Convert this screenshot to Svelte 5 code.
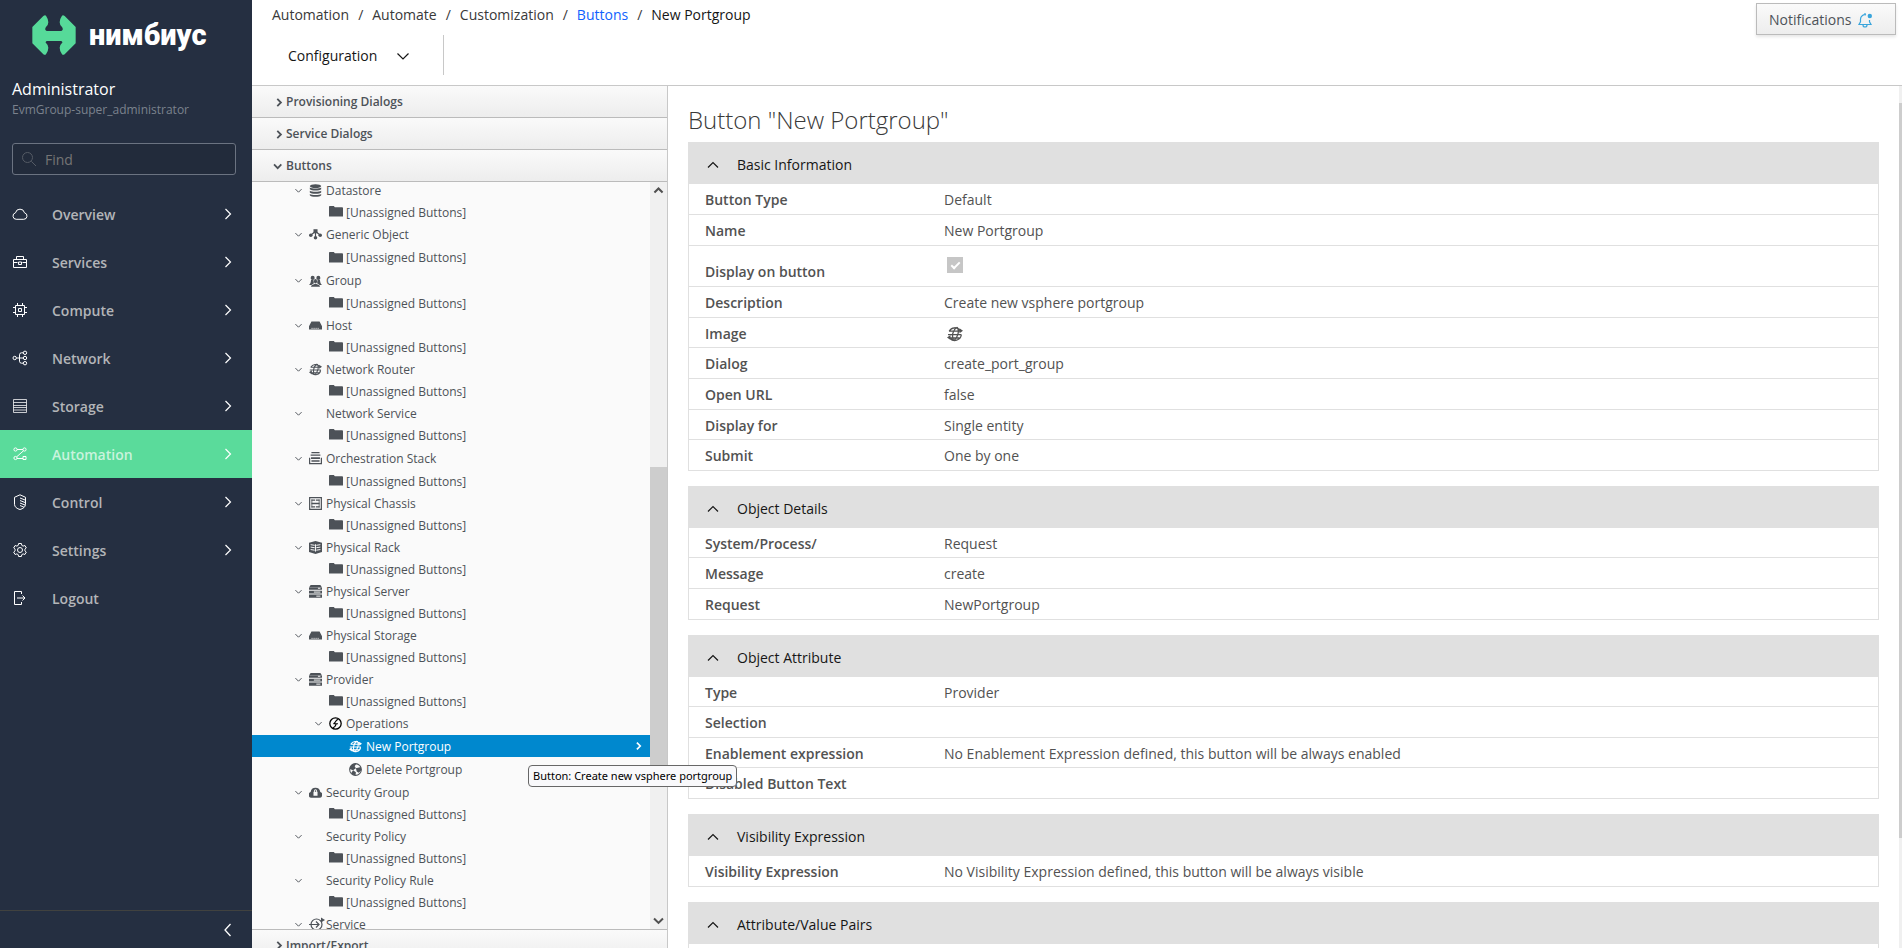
<script>
	const navItems = [
		{ label: 'Overview', icon: 'cloud' },
		{ label: 'Services', icon: 'toolbox' },
		{ label: 'Compute', icon: 'chip' },
		{ label: 'Network', icon: 'network' },
		{ label: 'Storage', icon: 'storage' },
		{ label: 'Automation', icon: 'flow' },
		{ label: 'Control', icon: 'shield' },
		{ label: 'Settings', icon: 'gear' },
		{ label: 'Logout', icon: 'logout', leaf: true }
	];

	const crumbs = ['Automation', 'Automate', 'Customization'];

	const tree = [
		{ label: 'Datastore', icon: 'database' },
		{ label: 'Generic Object', icon: 'object', size: 'tall', childSize: 'tall' },
		{ label: 'Group', icon: 'group', size: 'tall' },
		{ label: 'Host', icon: 'host' },
		{ label: 'Network Router', icon: 'globe' },
		{ label: 'Network Service' },
		{ label: 'Orchestration Stack', icon: 'stack', size: 'taller' },
		{ label: 'Physical Chassis', icon: 'chassis' },
		{ label: 'Physical Rack', icon: 'rack' },
		{ label: 'Physical Server', icon: 'server' },
		{ label: 'Physical Storage', icon: 'host' },
		{ label: 'Provider', icon: 'server', operations: true },
		{ label: 'Security Group', icon: 'cloudlock' },
		{ label: 'Security Policy' },
		{ label: 'Security Policy Rule' },
		{ label: 'Service', icon: 'service', leaf: true }
	];

	const rows = tree.flatMap((node) => {
		const list = [{ ...node, depth: 0, caret: true }];
		if (!node.leaf) {
			list.push({ label: '[Unassigned Buttons]', icon: 'folder', depth: 1, size: node.childSize });
		}
		if (node.operations) {
			list.push(
				{ label: 'Operations', icon: 'bolt', depth: 1, caret: true, size: 'tall' },
				{ label: 'New Portgroup', icon: 'globe', depth: 2 },
				{ label: 'Delete Portgroup', icon: 'ball', depth: 2, size: 'taller' }
			);
		}
		return list;
	});

	let sections = $state([
		{
			title: 'Basic Information',
			open: true,
			rows: [
				{ label: 'Button Type', value: 'Default' },
				{ label: 'Name', value: 'New Portgroup' },
				{ label: 'Display on button', type: 'check' },
				{ label: 'Description', value: 'Create new vsphere portgroup' },
				{ label: 'Image', type: 'icon', short: true },
				{ label: 'Dialog', value: 'create_port_group' },
				{ label: 'Open URL', value: 'false' },
				{ label: 'Display for', value: 'Single entity', short: true },
				{ label: 'Submit', value: 'One by one' }
			]
		},
		{
			title: 'Object Details',
			open: true,
			rows: [
				{ label: 'System/Process/', value: 'Request', short: true },
				{ label: 'Message', value: 'create' },
				{ label: 'Request', value: 'NewPortgroup' }
			]
		},
		{
			title: 'Object Attribute',
			open: true,
			rows: [
				{ label: 'Type', value: 'Provider', short: true },
				{ label: 'Selection', value: '' },
				{
					label: 'Enablement expression',
					value: 'No Enablement Expression defined, this button will be always enabled',
					short: true
				},
				{ label: 'Disabled Button Text', value: '' }
			]
		},
		{
			title: 'Visibility Expression',
			open: true,
			rows: [
				{
					label: 'Visibility Expression',
					value: 'No Visibility Expression defined, this button will be always visible'
				}
			]
		},
		{ title: 'Attribute/Value Pairs', open: true, rows: [{ label: '', value: '' }] }
	]);

	let current = $state('Automation');
	let selected = $state('New Portgroup');

	// inner markup of the 16x16 icons
	const line = 'fill="none" stroke="currentColor"';
	const icons = {
		cloud: `<path ${line} d="M4.2 13.3h7.6a3.3 3.3 0 0 0 .7-6.5 4.6 4.6 0 0 0-9 0 3.3 3.3 0 0 0 .7 6.5z"/>`,
		toolbox: `<path ${line} d="M1.5 5.5h13v8h-13zM4.5 5.5v-3h7v3M1.5 8.5h4m5 0h4M6.5 8v2.500h3V8z"/>`,
		chip: `<path ${line} d="M3.500 3.500h9v9h-9zM6.500 6.500h3v3h-3zM5.500 1v2.500M10.500 1v2.500M5.500 12.500V15M10.500 12.500V15M1 5.500h2.500M1 10.500h2.500M12.500 5.500H15M12.500 10.500H15"/>`,
		network: `<g ${line}><circle cx="2.700" cy="8" r="1.700"/><circle cx="13" cy="2.800" r="1.700"/><circle cx="13" cy="8" r="1.700"/><circle cx="13" cy="13.200" r="1.700"/><path d="M4.500 8h6.800M11.300 2.800H9.500a2 2 0 0 0-2 2v6.400a2 2 0 0 0 2 2h1.800"/></g>`,
		storage: `<path ${line} stroke-opacity=".75" d="M1.500 1.500h13v13h-13zM1.500 4.500h13M1.500 7.500h13M1.500 9.500h13M1.500 12h13"/>`,
		flow: `<g ${line}><circle cx="3.500" cy="3.500" r="1.600"/><circle cx="12.500" cy="3.500" r="1.600"/><circle cx="3.500" cy="12" r="1.600"/><path d="M5 3.500h6M11.500 4.800L4.700 10.800M5 12.500h6M11 10.500h3v3h-3z"/></g>`,
		shield: `<path ${line} d="M8 .8L2.500 3.300v7c0 2.600 2.500 4.500 5.500 5.200 3-.7 5.500-2.600 5.500-5.200v-7zM8 4l5 2M8 6.500l5 2M8 9l5 2M8 11.500l4 1.700"/>`,
		gear: `<path ${line} d="M6.600 1.500h2.800l.4 1.900 1.300.7 1.800-.6 1.400 2.400-1.400 1.300v1.600l1.400 1.300-1.400 2.400-1.800-.6-1.300.7-.4 1.900H6.600l-.4-1.900-1.300-.7-1.800.6-1.400-2.400 1.400-1.300V7.200L1.700 5.900l1.400-2.400 1.800.6 1.300-.7z"/><circle cx="8" cy="8" r="2.500" ${line}/>`,
		logout: `<path ${line} d="M9.500 4V1.500h-7v13h7V12M5 8h8M10.500 5.500L13 8l-2.500 2.500"/>`,
		find: `<g ${line}><circle cx="6.500" cy="6.500" r="5"/><path d="M10.300 10.300L15 15"/></g>`,
		right: `<path ${line} stroke-width="1.200" d="M5.500 3l5 5-5 5"/>`,
		left: `<path ${line} stroke-width="1.300" d="M10.500 2l-5.500 6 5.500 6"/>`,
		down: `<path ${line} stroke-width="1.200" d="M2.500 5.500L8 11l5.500-5.500"/>`,
		up: `<path ${line} stroke-width="1.200" d="M3 10.500l5-5 5 5"/>`,
		angleright: `<path ${line} stroke-width="2.200" d="M6.500 3.500L11 8l-4.500 4.500"/>`,
		angledown: `<path ${line} stroke-width="2.200" d="M2.500 5.500L7 10l4.500-4.500"/>`,
		caret: `<path ${line} stroke-width="1.700" d="M2.500 5.500L8 11l5.500-5.500"/>`,
		bell: `<path ${line} stroke-width="1.200" d="M9 2.800a4.500 4.500 0 0 0-5.500 4.400v2.600L2 12.500h12l-1.500-2.700V8M6 13a2 2 0 0 0 4 0M8 1v1.500"/><circle cx="12.800" cy="4" r="2.200" fill="currentColor"/>`,
		folder: `<path fill="currentColor" d="M0 2.200C0 1.500.4 1 1 1h4.500l1.200 1.500H15c.6 0 1 .4 1 1V13H0z"/>`,
		database: `<g fill="currentColor"><ellipse cx="8" cy="2.600" rx="7" ry="2.400"/><path d="M1 4.300c2 1.800 12 1.800 14 0v2.200c-1.500 2.200-12.500 2.200-14 0zM1 8.300c2 1.800 12 1.800 14 0v2.200c-1.500 2.200-12.500 2.200-14 0zM1 12.200c2 1.800 12 1.800 14 0v1.600c-1.500 2.600-12.500 2.600-14 0z"/></g>`,
		object: `<g fill="currentColor"><path d="M5.500 1.500h5v5h-5z"/><circle cx="2.200" cy="9" r="2.200"/><circle cx="13.800" cy="9" r="2.200"/><circle cx="8" cy="12" r="2.200"/></g><path ${line} stroke-width="1.400" d="M8 4v8M7 5L2 9M9 5l5 4"/>`,
		group: `<g fill="currentColor"><circle cx="4.500" cy="4.800" r="2.500"/><circle cx="11.500" cy="4.800" r="2.500"/><path d="M0 13.500c2-1 2-3 2.500-6h3l.5 4-3 2zM16 13.500c-2-1-2-3-2.500-6h-3l-.5 4 3 2z"/><ellipse cx="8" cy="9" rx="1.900" ry="2.800"/><path d="M2.500 15.700c0-2 2-3 4.500-3.500h2c2.500.5 4.500 1.500 4.500 3.500z"/></g>`,
		host: `<path fill="currentColor" d="M3 3h10l3 6H0zM0 9h16v4H0z"/><path stroke="#fafafa" stroke-dasharray="1.500 1" d="M3 11.500h10"/>`,
		globe: `<g ${line} stroke-width="1.300"><path d="M13 4.200A6.500 6.500 0 0 0 2.200 5.200M3 12.200a6.500 6.500 0 0 0 11.300-3.200M9.800 1.200C5.700 4 4.500 10 6.500 14.500M10.200 1.200c2.500 4 .5 10.500-3.500 13.600M2 5.200h11M1 8.700h13.500M2.500 12h10"/></g><path fill="currentColor" d="M12.500 2.200L16 4.700l-3.500 2.500zM3.500 9L0 11.500 3.500 14z"/>`,
		stack: `<path fill="currentColor" d="M3 0h10v1.400H3zM2 3.200h12v1.500H2zM2.500 6.500h11v2h-11zM3 10h10v2H3zM0 7h1.500v6.500h13V7H16v8H0z"/>`,
		chassis: `<path ${line} stroke-width="1.500" d="M.8.800h14.400v14.400H.8z"/><path fill="currentColor" d="M3 3h4.500v1.500H3zM8.500 3H13v1.500H8.500zM3 7.200h10v1.600H3zM3 11.500h4.500V13H3zM8.500 11.500H13V13H8.500z"/><path ${line} d="M3.500 3v10M12.500 3v10"/>`,
		rack: `<path fill="currentColor" d="M0 2l8-2 8 2v11.500L8 16l-8-2.500z"/><path stroke="#fafafa" stroke-width="1.200" fill="none" d="M2 4.500l5 .8M2 7.500l5 .8M2 10.500l5 .8M9 5.300l5-.8M9 8.300l5-.8M9 11.300l5-.8M8 4v9"/>`,
		server: `<path fill="currentColor" d="M2 0h12l2 3H0zM0 3.500h16v2.300H0zM0 7h16v3.500H0zM0 11.700h16v4H0z"/><path stroke="#fafafa" stroke-width="1.200" d="M6 8.700h8M9 13.700h5M11 4h3"/>`,
		bolt: `<g fill="none" stroke="#000"><circle cx="8" cy="8" r="7" stroke-width="1.600"/><path stroke-width="1.400" d="M11.500 3C7.500 3.500 9 6.500 5.500 8.300h5.500M9 8c-1 2-.5 4-4 5.200"/></g>`,
		ball: `<circle cx="8" cy="8" r="7.200" fill="#fafafa" stroke="currentColor" stroke-width="1.300"/><path fill="currentColor" d="M9 .8C4 .3 1 4 .9 7.500L5 9l3.500-2.500L7 4zM8.500 6.500L14.500 5l.8 4L12 12l-2.500-1.500zM5 9l3.500 2.500L8 15.200c-2 0-4-1-5.200-3z"/>`,
		cloudlock: `<path fill="currentColor" fill-rule="evenodd" d="M3.500 14.500A3.600 3.600 0 0 1 2 7.500 6 6 0 0 1 13.900 7.500a3.600 3.600 0 0 1-1.400 7zM5.500 7v5h5V7h-.6V6a1.900 1.900 0 0 0-3.800 0v1zm1.700 0V6a.8.800 0 0 1 1.600 0v1z"/>`,
		service: `<g ${line} stroke-width="1.200"><circle cx="7.500" cy="8.500" r="5.500"/><path d="M0 8.500h9.500M7 5.500l3 3-3 3"/></g><path fill="currentColor" d="M12 1.500l4 2.500-4 2.500z"/>`
	};
</script>

{#snippet icon(name)}
	<svg class="icon {name}" viewBox="0 0 16 16" aria-hidden="true">{@html icons[name]}</svg>
{/snippet}

{#snippet fold(title, open)}
	<button class="fold">
		{@render icon(open ? 'angledown' : 'angleright')}
		<span>{title}</span>
	</button>
{/snippet}

<div class="page">
	<aside class="sidebar">
		<a class="brand" href="#home">
			<svg viewBox="0 0 130 120" aria-hidden="true">
				<path
					fill="#56da99"
					d="M33 3Q38-1 41 2Q48 12 48 22Q48 30 41 36Q37 41 40 46L43 48H87L90 46Q93 41 89 36Q82 30 82 22Q82 12 89 2Q92-1 97 3L130 36V85L97 118Q92 121 89 118Q82 108 82 98Q82 90 89 84Q92 81 87 78H43Q38 81 41 84Q48 90 48 98Q48 108 41 118Q38 121 33 118L0 85V36Z"
				/>
			</svg>
			<span>нимбиус</span>
		</a>
		<div class="user">
			<div class="user-name">Administrator</div>
			<div class="user-group">EvmGroup-super_administrator</div>
		</div>
		<label class="search">
			{@render icon('find')}
			<input type="text" placeholder="Find" aria-label="Find" />
		</label>
		<nav class="menu" aria-label="Main">
			{#each navItems as item}
				<a
					href="#{item.label.toLowerCase()}"
					class:active={item.label === current}
					onclick={() => (current = item.label)}
				>
					{@render icon(item.icon)}
					<span>{item.label}</span>
					{#if !item.leaf}{@render icon('right')}{/if}
				</a>
			{/each}
		</nav>
		<button class="collapse" aria-label="Collapse menu">{@render icon('left')}</button>
	</aside>

	<div class="main">
		<header>
			<nav class="crumbs" aria-label="Breadcrumb">
				{#each crumbs as crumb}
					<span>{crumb}</span>
				{/each}
				<a href="#buttons">Buttons</a>
				<strong>New Portgroup</strong>
			</nav>
			<div class="toolbar">
				<button>Configuration {@render icon('down')}</button>
			</div>
		</header>

		<div class="columns">
			<section class="explorer">
				{@render fold('Provisioning Dialogs', false)}
				{@render fold('Service Dialogs', false)}
				{@render fold('Buttons', true)}
				<div class="tree-wrap">
					<div class="tree">
						{#each rows as row}
							<button
								class="row {row.size ?? ''}"
								class:selected={row.label === selected}
								style="padding-left: {42 + row.depth * 20}px"
								onclick={() => (selected = row.label)}
							>
								<span class="slot caret-slot">{#if row.caret}{@render icon('caret')}{/if}</span>
								<span class="slot">{#if row.icon}{@render icon(row.icon)}{/if}</span>
								<span class="row-label">{row.label}</span>
								{#if row.label === selected}{@render icon('angleright')}{/if}
							</button>
						{/each}
					</div>
					<div class="scrollbar" aria-hidden="true">
						{@render icon('up')}
						<div class="track"><div class="thumb"></div></div>
						{@render icon('down')}
					</div>
				</div>
				{@render fold('Import/Export', false)}
			</section>

			<main class="details">
				<h1>Button "New Portgroup"</h1>
				{#each sections as section}
					<section class="panel">
						<button class="panel-head" aria-expanded={section.open} onclick={() => (section.open = !section.open)}>
							{@render icon(section.open ? 'up' : 'down')}
							<span>{section.title}</span>
						</button>
						{#if section.open}
							<table>
								<tbody>
									{#each section.rows as row}
										<tr class:short={row.short} class:check-row={row.type === 'check'}>
											<th scope="row">
												{#if row.type === 'check'}
													<label for="display">{row.label}</label>
												{:else}
													{row.label}
												{/if}
											</th>
											<td>
												{#if row.type === 'check'}
													<input id="display" type="checkbox" checked disabled />
												{:else if row.type === 'icon'}
													{@render icon('globe')}
												{:else}
													{row.value}
												{/if}
											</td>
										</tr>
									{/each}
								</tbody>
							</table>
						{/if}
					</section>
				{/each}
			</main>
			<div class="page-scroll" aria-hidden="true"><div></div></div>
		</div>
	</div>
	<button class="notifications">Notifications {@render icon('bell')}</button>
	<div class="tooltip" role="tooltip">Button: Create new vsphere portgroup</div>
</div>

<style>
	:global(body) {
		margin: 0;
		overflow: hidden;
	}

	.page {
		position: relative;
		display: flex;
		height: 100vh;
		overflow: hidden;
		background: #fff;
		color: #525252;
		font-family: 'Open Sans', 'Noto Sans', sans-serif;
		font-size: 14px;
		line-height: 20px;
	}

	button,
	input {
		margin: 0;
		border: 0;
		padding: 0;
		background: none;
		color: inherit;
		font: inherit;
		text-align: left;
	}

	button {
		cursor: pointer;
	}

	a {
		color: inherit;
		text-decoration: none;
	}

	.icon {
		flex: none;
		width: 16px;
		height: 16px;
	}

	.sidebar {
		display: flex;
		flex: none;
		flex-direction: column;
		width: 252px;
		background: #252f41;
		color: #fff;
	}

	.brand {
		display: flex;
		align-items: center;
		gap: 13px;
		padding: 15px 0 0 32px;
		font-family: Roboto, 'Open Sans', sans-serif;
		font-size: 29px;
		font-weight: 900;
		line-height: 40px;
	}

	.brand svg {
		width: 44px;
		height: 40px;
	}

	.user {
		padding: 23px 12px 0;
	}

	.user-name {
		font-size: 16px;
		line-height: 22px;
	}

	.user-group {
		color: #7b828d;
		font-size: 12px;
	}

	.search {
		display: flex;
		align-items: center;
		gap: 8px;
		box-sizing: border-box;
		height: 32px;
		margin: 23px 16px 15px 12px;
		border: 1px solid #6b7381;
		border-radius: 3px;
		padding: 0 8px;
		background: #222b3b;
		color: #555b65;
	}

	.search input {
		flex: 1;
		min-width: 0;
		outline: 0;
		padding-top: 2px;
	}

	.search input::placeholder {
		color: #757575;
	}

	.menu {
		flex: 1;
	}

	.menu a {
		display: flex;
		align-items: center;
		height: 48px;
		padding: 0 16px 0 12px;
		font-weight: 600;
	}

	.menu span {
		flex: 1;
		padding: 2px 0 0 24px;
		color: #b3b5b8;
	}

	.menu .active {
		background: #5adb9b;
	}

	.menu .active span {
		color: #c9f3dd;
	}

	.collapse {
		display: flex;
		align-items: center;
		justify-content: flex-end;
		height: 38px;
		border-top: 1px solid #41423f;
		padding-right: 16px;
	}

	.main {
		display: flex;
		flex: 1;
		flex-direction: column;
		min-width: 0;
	}

	header {
		border-bottom: 1px solid #c8c8c8;
		color: #161616;
	}

	.crumbs {
		display: flex;
		padding: 5px 20px;
		color: #393939;
	}

	.crumbs > :not(:last-child)::after {
		padding: 0 9px;
		color: #393939;
		content: '/';
	}

	.crumbs a {
		color: #0f62fe;
	}

	.crumbs strong {
		color: #161616;
		font-weight: 400;
	}

	.toolbar {
		display: flex;
		padding: 5px 0 10px 36px;
	}

	.toolbar button {
		display: flex;
		align-items: center;
		gap: 18px;
		box-sizing: border-box;
		height: 40px;
		border-right: 1px solid #c8c8c8;
		padding: 2px 32px 0 0;
	}

	.columns {
		display: flex;
		flex: 1;
		min-height: 0;
	}

	.explorer {
		display: flex;
		flex: none;
		flex-direction: column;
		width: 415px;
		margin-bottom: -13px;
		border-right: 1px solid #c8c8c8;
		background: #fafafa;
	}

	.fold {
		display: flex;
		flex: none;
		align-items: center;
		gap: 1px;
		height: 32px;
		border-bottom: 1px solid #bbb;
		padding: 1px 0 0 20px;
		background: linear-gradient(#fafafa, #ededed);
		color: #4d5258;
		font-size: 12px;
		font-weight: 600;
	}

	.fold .icon {
		width: 13px;
		height: 13px;
	}

	.fold:last-child {
		border-top: 1px solid #bbb;
	}

	.tree-wrap {
		display: flex;
		flex: 1;
		min-height: 0;
		overflow: hidden;
	}

	.tree {
		flex: 1;
		margin-top: -3px;
		color: #4d5258;
		font-size: 12px;
	}

	.row {
		display: flex;
		align-items: center;
		box-sizing: border-box;
		width: 100%;
		height: 22px;
		padding-right: 6px;
	}

	.tall {
		height: 23px;
	}

	.taller {
		height: 24px;
	}

	.slot {
		display: flex;
		width: 17px;
	}

	.slot .icon {
		width: 13px;
		height: 13px;
	}

	.caret-slot {
		width: 15px;
	}

	.slot .caret {
		width: 9px;
		height: 9px;
	}

	.slot .folder {
		width: 14px;
		height: 14px;
	}

	.slot .service {
		width: 16px;
		height: 16px;
	}

	.row-label {
		flex: 1;
		padding-top: 1px;
	}

	.row > .icon {
		width: 12px;
		height: 12px;
	}

	.selected {
		background: #0088ce;
		color: #fff;
	}

	.scrollbar {
		display: flex;
		flex-direction: column;
		align-items: center;
		width: 17px;
		background: #f0f0f0;
		color: #505050;
	}

	.scrollbar .icon {
		width: 13px;
		height: 17px;
	}

	.scrollbar .icon :global(path) {
		stroke-width: 2.5;
	}

	.track {
		flex: 1;
		width: 100%;
	}

	.thumb {
		height: 43%;
		margin-top: 268px;
		background: #cdcdcd;
	}

	.details {
		flex: 1;
		min-width: 0;
		overflow: hidden;
		padding: 19px 20px 0;
	}

	h1 {
		margin: 0 0 7px;
		color: #393939;
		font-size: 24px;
		font-weight: 300;
		line-height: 30px;
	}

	.panel {
		margin-bottom: 15px;
	}

	.panel-head {
		display: flex;
		align-items: center;
		gap: 16px;
		box-sizing: border-box;
		width: 100%;
		height: 42px;
		padding: 3px 0 0 17px;
		background: #e0e0e0;
		color: #161616;
	}

	table {
		box-sizing: border-box;
		width: 100%;
		border: 1px solid #e0e0e0;
		border-width: 0 1px;
		border-collapse: separate;
		border-spacing: 0;
		table-layout: fixed;
	}

	tr {
		height: 31px;
	}

	.short {
		height: 30px;
	}

	th,
	td {
		border-bottom: 1px solid #e0e0e0;
		padding: 2px 0 0 16px;
		text-align: left;
		vertical-align: middle;
	}

	th {
		width: 223px;
		font-weight: 600;
	}

	.check-row {
		height: 41px;
	}

	.check-row th {
		padding-top: 12px;
	}

	td .icon {
		display: block;
		margin-left: 3px;
	}

	td input {
		display: grid;
		place-items: center;
		appearance: none;
		width: 16px;
		height: 16px;
		margin: 0 0 4px 3px;
		background: #c6c6c6;
	}

	td input::after {
		width: 3px;
		height: 7px;
		margin-bottom: 2px;
		border: solid #fff;
		border-width: 0 2px 2px 0;
		content: '';
		transform: rotate(45deg);
	}

	.page-scroll {
		width: 3px;
		padding-top: 17px;
		background: #f0f0f0;
	}

	.page-scroll div {
		height: 87%;
		background: #cdcdcd;
	}

	.notifications {
		position: absolute;
		top: 3px;
		right: 6px;
		display: flex;
		align-items: center;
		gap: 6px;
		box-sizing: border-box;
		width: 140px;
		height: 32px;
		border: 1px solid #bbb;
		padding: 2px 0 0 12px;
		background: linear-gradient(#fafafa, #ededed);
		box-shadow: 0 2px 3px rgba(3, 3, 3, 0.1);
		color: #4d5258;
	}

	.bell {
		color: #39a5dc;
	}

	.tooltip {
		position: absolute;
		top: 765px;
		left: 528px;
		border: 1px solid #676767;
		border-radius: 4px;
		padding: 0 4px;
		background: #f9f9fb;
		color: #000;
		font-family: 'Noto Sans', sans-serif;
		font-size: 11px;
	}
</style>
